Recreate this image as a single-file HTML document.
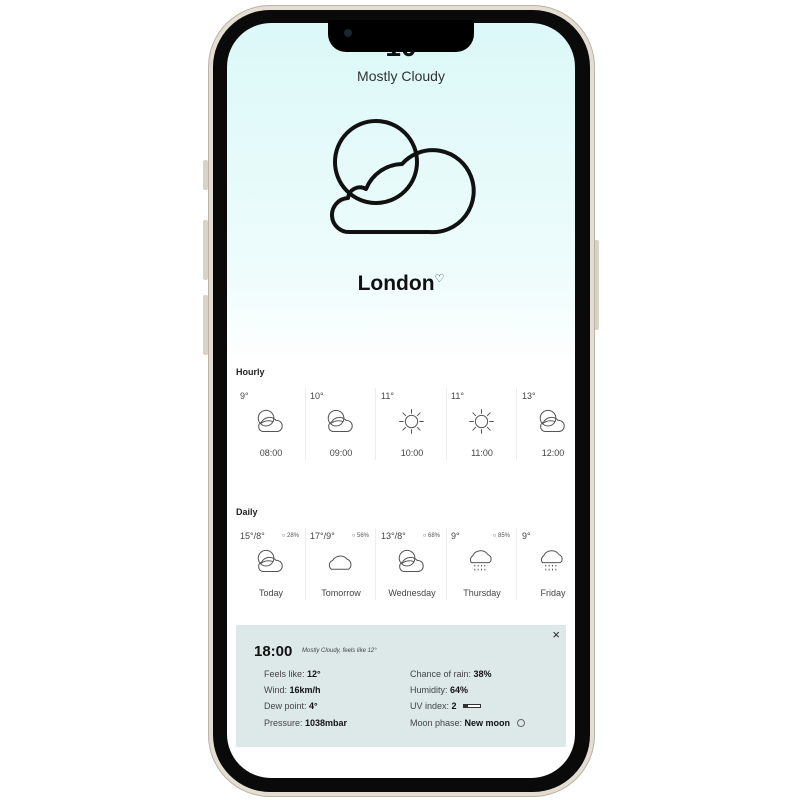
<!DOCTYPE html>
<html><head><style>
*{margin:0;padding:0;box-sizing:border-box}
body{width:800px;height:800px;background:#fff;position:relative;overflow:hidden;font-family:"Liberation Sans",sans-serif;color:#222}
.frame{position:absolute;left:208px;top:5px;width:387px;height:792px;border-radius:62px;background:#e4ddd2;border:1px solid #b9b2a6}
.bezel{position:absolute;left:213px;top:10px;width:377px;height:782px;border-radius:57px;background:#0a0a0a}
.screen{position:absolute;left:227px;top:23px;width:348px;height:755px;border-radius:44px;overflow:hidden;background:linear-gradient(#dcf8f8 0px,#eefcfc 250px,#fff 340px)}
.notch{position:absolute;left:328px;top:20px;width:146px;height:32px;background:#000;border-radius:0 0 18px 18px}
.btn{position:absolute;background:#d9d2c6;border-radius:2px}
.abs{position:absolute}
.col{position:absolute;width:70px;height:72px;border-right:1px solid #eee}
.col .t{position:absolute;left:4px;top:3px;font-size:9px;color:#444}
.col .p{position:absolute;right:6px;top:5px;font-size:6px;color:#555}
.col .l{position:absolute;left:0;width:70px;text-align:center;top:60px;font-size:9px;color:#444}
.col svg{position:absolute;left:20px;top:20px}
.det{position:absolute;left:236px;top:625px;width:330px;height:122px;background:#dde8e8}
.det .r{position:absolute;font-size:9px;color:#444}
.det b{color:#111}
</style></head><body>
<div class="btn" style="left:203px;top:160px;width:5px;height:30px"></div>
<div class="btn" style="left:203px;top:220px;width:5px;height:60px"></div>
<div class="btn" style="left:203px;top:295px;width:5px;height:60px"></div>
<div class="btn" style="left:594px;top:240px;width:5px;height:90px"></div>
<div class="frame"></div>
<div class="bezel"></div>
<div class="screen"></div>
<div class="abs" style="left:226px;top:31px;width:350px;text-align:center;font-size:28px;font-weight:bold;color:#111">10</div>
<div class="abs" style="left:226px;top:68px;width:350px;text-align:center;font-size:14px;color:#333">Mostly Cloudy</div>
<svg class="abs" style="left:0;top:0" width="800" height="300">
<g fill="none" stroke="#111" stroke-width="4" stroke-linejoin="round">
<circle cx="376" cy="162" r="41"/>
<path d="M350,232 A17,17 0 0 1 348,198 A12,12 0 0 1 366,189 A40,40 0 0 1 402,164 A41,41 0 1 1 429,232 Z"/>
</g></svg>
<div class="abs" style="left:226px;top:272px;width:350px;text-align:center;font-size:21px;font-weight:bold;color:#111">London<span style="font-size:11px;font-weight:normal;vertical-align:8px">♡</span></div>
<div class="notch"></div>
<div class="abs" style="left:344px;top:29px;width:8px;height:8px;border-radius:50%;background:#1a2530"></div>
<div class="abs" style="left:236px;top:367px;font-size:9px;font-weight:bold">Hourly</div>
<div class="abs" style="left:236px;top:507px;font-size:9px;font-weight:bold">Daily</div>

<svg width="0" height="0" style="position:absolute"><defs>
<g id="pc" fill="none" stroke="#555" stroke-width="0.9"><circle cx="9" cy="9" r="7"/><path d="M6,21 A4.5,4.5 0 0 1 5,12.5 A8,8 0 0 1 18,11 A5,5 0 0 1 19,21 Z"/><path d="M4,14 Q9,10 15,12"/></g>
<g id="sun" fill="none" stroke="#555" stroke-width="0.9"><circle cx="13" cy="12" r="5.5"/><path d="M13,1v4M13,19v4M2,12h4M20,12h4M5,4l3,3M18,17l3,3M21,4l-3,3M8,17l-3,3"/></g>
<g id="cl" fill="none" stroke="#555" stroke-width="0.9"><path d="M5,19 A4.5,4.5 0 0 1 6,11 A8,8 0 0 1 19,10 A5,5 0 0 1 20,19 Z"/></g>
<g id="rn" fill="none" stroke="#555" stroke-width="0.9"><path d="M4,13 A4,4 0 0 1 5,7 A8,8 0 0 1 19,6 A4,4 0 0 1 20,13 Z"/><path d="M7,15v1.5M10,15v1.5M13,15v1.5M16,15v1.5M7,18.5v1.5M10,18.5v1.5M13,18.5v1.5M16,18.5v1.5"/></g>
</defs></svg>

<div class="col" style="left:236px;top:388px"><span class="t">9°</span><svg width="29" height="27" viewBox="0 0 26 24"><use href="#pc"/></svg><span class="l">08:00</span></div>
<div class="col" style="left:306px;top:388px"><span class="t">10°</span><svg width="29" height="27" viewBox="0 0 26 24"><use href="#pc"/></svg><span class="l">09:00</span></div>
<div class="col" style="left:377px;top:388px"><span class="t">11°</span><svg width="29" height="27" viewBox="0 0 26 24"><use href="#sun"/></svg><span class="l">10:00</span></div>
<div class="col" style="left:447px;top:388px"><span class="t">11°</span><svg width="29" height="27" viewBox="0 0 26 24"><use href="#sun"/></svg><span class="l">11:00</span></div>
<div class="col" style="left:518px;top:388px;width:58px;border:0"><span class="t">13°</span><svg width="29" height="27" viewBox="0 0 26 24"><use href="#pc"/></svg><span class="l">12:00</span></div>

<div class="col" style="left:236px;top:528px"><span class="t">15°/8°</span><span class="p">○ 28%</span><svg width="29" height="27" viewBox="0 0 26 24"><use href="#pc"/></svg><span class="l">Today</span></div>
<div class="col" style="left:306px;top:528px"><span class="t">17°/9°</span><span class="p">○ 56%</span><svg width="29" height="27" viewBox="0 0 26 24"><use href="#cl"/></svg><span class="l">Tomorrow</span></div>
<div class="col" style="left:377px;top:528px"><span class="t">13°/8°</span><span class="p">○ 68%</span><svg width="29" height="27" viewBox="0 0 26 24"><use href="#pc"/></svg><span class="l">Wednesday</span></div>
<div class="col" style="left:447px;top:528px"><span class="t">9°</span><span class="p">○ 85%</span><svg width="29" height="27" viewBox="0 0 26 24"><use href="#rn"/></svg><span class="l">Thursday</span></div>
<div class="col" style="left:518px;top:528px;width:58px;border:0"><span class="t">9°</span><svg width="29" height="27" viewBox="0 0 26 24"><use href="#rn"/></svg><span class="l" style="width:70px">Friday</span></div>

<div class="det">
<div class="r" style="right:6px;top:2px;font-size:13px;color:#222">×</div>
<div class="r" style="left:18px;top:18px;font-size:15px;font-weight:bold;color:#111">18:00</div>
<div class="r" style="left:66px;top:23px;font-size:6px;font-style:italic">Mostly Cloudy, feels like 12°</div>
<div class="r" style="left:28px;top:44px">Feels like: <b>12°</b></div>
<div class="r" style="left:28px;top:60px">Wind: <b>16km/h</b></div>
<div class="r" style="left:28px;top:76px">Dew point: <b>4°</b></div>
<div class="r" style="left:28px;top:93px">Pressure: <b>1038mbar</b></div>
<div class="r" style="left:174px;top:44px">Chance of rain: <b>38%</b></div>
<div class="r" style="left:174px;top:60px">Humidity: <b>64%</b></div>
<div class="r" style="left:174px;top:76px">UV index: <b>2</b> <span style="display:inline-block;width:18px;height:4px;border:1px solid #333;vertical-align:1px;margin-left:4px;background:linear-gradient(90deg,#333 25%,#fff 25%)"></span></div>
<div class="r" style="left:174px;top:93px">Moon phase: <b>New moon</b> <span style="display:inline-block;width:8px;height:8px;border:1px solid #666;border-radius:50%;margin-left:4px;vertical-align:-1px"></span></div>
</div>
</body></html>
